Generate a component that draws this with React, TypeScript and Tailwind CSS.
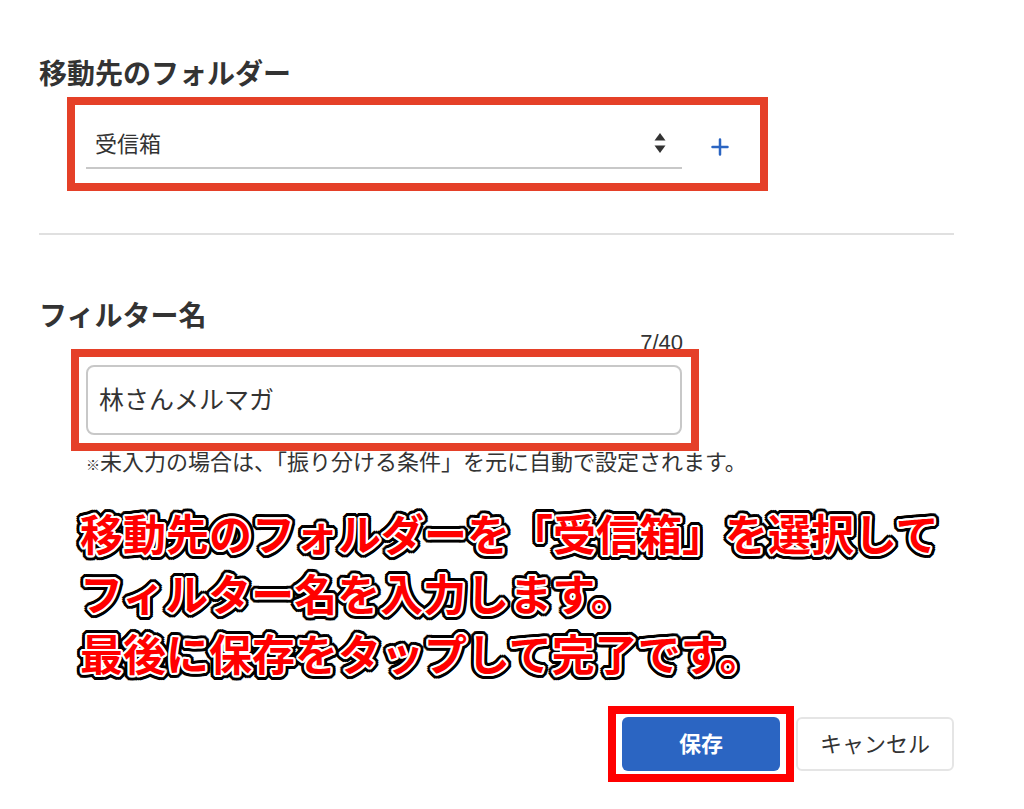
import { useState } from "react"

const FOLDERS = ["受信箱"]
const MAX_LENGTH = 40

function SortArrows() {
  return (
    <svg
      width="12"
      height="20"
      viewBox="0 0 12 20"
      aria-hidden="true"
      className="pointer-events-none absolute right-4 top-7 fill-[#333333]"
    >
      <path d="M6 0l5.500 7.500H.5z" />
      <path d="M.5 12.500h11L6 20z" />
    </svg>
  )
}

function PlusIcon() {
  return (
    <svg
      width="18"
      height="18"
      viewBox="0 0 18 18"
      aria-hidden="true"
      className="stroke-[#2b65c2]"
    >
      <path d="M9 1.500v15M1.500 9h15" strokeWidth="2.500" strokeLinecap="round" />
    </svg>
  )
}

export default function App() {
  const [folder, setFolder] = useState(FOLDERS[0])
  const [name, setName] = useState("林さんメルマガ")

  return (
    <main
      lang="ja"
      className="bg-white pt-[55px] pr-[70px] pb-7 pl-[39px] font-['Liberation_Sans','Noto_Sans_CJK_JP',sans-serif] text-[22px] text-[#333333]"
    >
      <form onSubmit={(e) => e.preventDefault()}>
        <label htmlFor="folder" className="block text-[28px] leading-10 font-bold">
          移動先のフォルダー
        </label>

        <div className="mt-[2px] ml-7 flex h-[94px] max-w-[701px] items-start border-8 border-[#e54028] pr-[30px] pl-[11px]">
          <div className="relative flex-1">
            <select
              id="folder"
              value={folder}
              onChange={(e) => setFolder(e.target.value)}
              className="h-16 w-full appearance-none border-b-2 border-[#c8c8c8] bg-white pt-4 pl-[9px]"
            >
              {FOLDERS.map((f) => (
                <option key={f} value={f}>
                  {f}
                </option>
              ))}
            </select>
            <SortArrows />
          </div>

          <button type="button" aria-label="フォルダーを追加" className="mt-8 ml-7 p-px">
            <PlusIcon />
          </button>
        </div>

        <hr className="mt-[42px] border-t-2 border-[#e0e0e0]" />

        <label
          htmlFor="filter-name"
          className="mt-[62px] block text-[28px] leading-10 font-bold"
        >
          フィルター名
        </label>

        <div className="ml-8 max-w-[628px]">
          <p className="-mt-2 pr-4 text-right leading-7">
            {name.length}/{MAX_LENGTH}
          </p>

          <div className="relative -mt-2 border-8 border-[#e54028] bg-white py-2 pr-[9px] pl-[7px]">
            <input
              id="filter-name"
              type="text"
              maxLength={MAX_LENGTH}
              value={name}
              onChange={(e) => setName(e.target.value)}
              className="block h-[70px] w-full rounded-lg border-2 border-[#c8c8c8] px-[11px] pb-1 text-[25px]"
            />
          </div>
        </div>

        <p className="ml-[47px] leading-6">
          <span className="text-sm font-bold">※</span>
          未入力の場合は、「振り分ける条件」を元に自動で設定されます。
        </p>

        {/* double outline: white shadows first so they sit on top of the black ones */}
        <p className="mt-[31px] ml-[41px] text-[43px] leading-[60px] font-bold whitespace-nowrap text-[#ff0000] [text-shadow:2px_0_white,-2px_0_white,0_2px_white,0_-2px_white,2px_1px_white,-2px_1px_white,2px_-1px_white,-2px_-1px_white,1px_2px_white,-1px_2px_white,1px_-2px_white,-1px_-2px_white,5px_0_black,-5px_0_black,0_5px_black,0_-5px_black,5px_2px_black,-5px_2px_black,5px_-2px_black,-5px_-2px_black,2px_5px_black,-2px_5px_black,2px_-5px_black,-2px_-5px_black,4px_3px_black,-4px_3px_black,4px_-3px_black,-4px_-3px_black,3px_4px_black,-3px_4px_black,3px_-4px_black,-3px_-4px_black,3px_0_black,-3px_0_black,0_3px_black,0_-3px_black]">
          移動先のフォルダーを「受信箱」を選択して
          <br />
          フィルター名を入力します。
          <br />
          最後に保存をタップして完了です。
        </p>

        <div className="mt-5 flex items-center justify-end gap-[2px]">
          <div className="border-8 border-[#ff0000] px-[6px] py-[3px]">
            <button
              type="submit"
              className="block h-[54px] w-[158px] rounded-md bg-[#2b65c2] font-bold text-white"
            >
              保存
            </button>
          </div>

          <button
            type="button"
            className="h-[54px] w-[158px] rounded-md border-2 border-[#e5e5e5] bg-white"
          >
            キャンセル
          </button>
        </div>
      </form>
    </main>
  )
}
